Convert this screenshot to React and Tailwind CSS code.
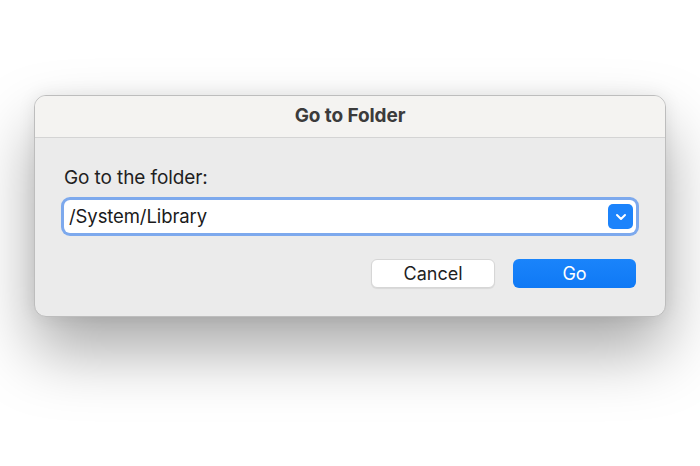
export default function App() {
  return (
    <div className="w-[700px] h-[466px] bg-white overflow-hidden pt-[95px] pl-[34px]" style={{ fontFamily: 'Inter, "Noto Sans", sans-serif' }}>
      <div className="w-[632px] rounded-[12px] border border-[#bdbdbd] bg-[#ebebeb] shadow-[0_34px_64px_rgba(0,0,0,0.34),0_0_18px_rgba(0,0,0,0.08)] overflow-hidden">
        <div className="h-[42px] bg-[#f4f3f1] border-b border-[#d4d4d4] flex items-center justify-center">
          <span className="text-[19px] font-bold text-[#3b3b3b] tracking-[-0.1px]">Go to Folder</span>
        </div>
        <div className="pt-[30px] px-[29px] pb-[28px]">
          <div className="h-[20px] text-[19px] leading-[20px] text-[#1f1f1f] tracking-[-0.1px]">Go to the folder:</div>
          <div className="mt-[12px] h-[33px] rounded-[6px] bg-white shadow-[0_0_0_3px_#7da9ed] flex items-center pl-[5px] pr-[3px]">
            <span className="flex-1 text-[18.5px] text-[#1a1a1a] tracking-[-0.1px]">/System/Library</span>
            <div className="w-[25px] h-[25px] rounded-[5px] bg-[#1c83fb] flex items-center justify-center">
              <svg width="12" height="8" viewBox="0 0 12 8" fill="none">
                <path d="M2 2 L6 6 L10 2" stroke="white" strokeWidth="2" strokeLinecap="round" strokeLinejoin="round" />
              </svg>
            </div>
          </div>
          <div className="mt-[26px] flex justify-end gap-[18px]">
            <button className="w-[124px] h-[29px] rounded-[6px] bg-white border border-[#d6d6d6] shadow-[0_1px_1px_rgba(0,0,0,0.08)] text-[18px] text-[#1f1f1f]">Cancel</button>
            <button className="w-[123px] h-[29px] rounded-[6px] bg-gradient-to-b from-[#1a84fb] to-[#0f79f5] text-[18px] text-white">Go</button>
          </div>
        </div>
      </div>
    </div>
  );
}
